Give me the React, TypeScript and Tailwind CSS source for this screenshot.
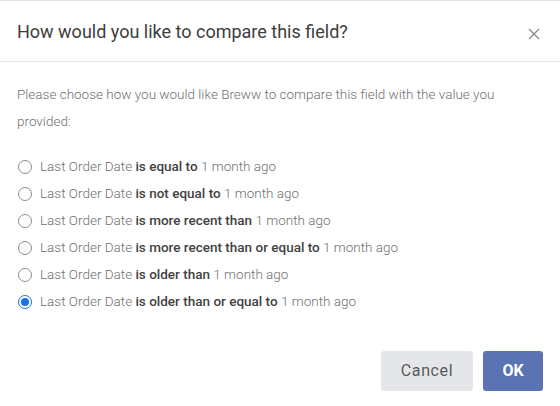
import { useState } from 'react'

const options = [
  'is equal to',
  'is not equal to',
  'is more recent than',
  'is more recent than or equal to',
  'is older than',
  'is older than or equal to',
]

export default function App() {
  const [choice, setChoice] = useState(5)

  return (
    <div className="h-[406px] w-[560px] overflow-hidden bg-white font-['Roboto',sans-serif]">
      <div className="border-t border-[#e3e3e3]">
        <div className="flex h-[61px] items-center justify-between border-b border-[#e5e5e5] pl-[17px] pr-[20px]">
          <h1 className="text-[18px] text-[#3d3d3d]">How would you like to compare this field?</h1>
          <button className="mt-[6px] text-[#8a8a8a]" aria-label="Close">
            <svg width="12" height="12" viewBox="0 0 12 12" stroke="currentColor" strokeWidth="1.3">
              <path d="M1 1l10 10M11 1L1 11" />
            </svg>
          </button>
        </div>

        <div className="px-[17px] pt-[19px]">
          <p className="text-[13.5px] font-light leading-[27px] text-[#6f6f6f]">
            Please choose how you would like Breww to compare this field with the value you provided:
          </p>

          <div className="mt-[18px] flex flex-col">
            {options.map((op, i) => (
              <label key={op} className="flex h-[27px] cursor-pointer items-center gap-[8px] pl-[1px]">
                <span
                  className={
                    i === choice
                      ? 'flex h-[14px] w-[14px] items-center justify-center rounded-full border-[1.5px] border-[#1a73e8]'
                      : 'h-[14px] w-[14px] rounded-full border-[1.5px] border-[#8d8d8d]'
                  }
                  onClick={() => setChoice(i)}
                >
                  {i === choice && <span className="h-[8px] w-[8px] rounded-full bg-[#1a73e8]" />}
                </span>
                <span className="text-[13.5px] font-light text-[#6f6f6f]">
                  Last Order Date <span className="font-medium text-[#424242]">{op}</span> 1 month ago
                </span>
              </label>
            ))}
          </div>
        </div>

        <div className="mt-[36px] flex justify-end gap-[10px] pr-[17px]">
          <button className="h-[40px] w-[92px] rounded-[3px] bg-[#e4e6e9] text-[16px] tracking-[0.6px] text-[#5a5a5a]">
            Cancel
          </button>
          <button className="h-[40px] w-[60px] rounded-[3px] bg-[#5a73b3] text-[16px] font-bold text-white">
            OK
          </button>
        </div>
      </div>
    </div>
  )
}
